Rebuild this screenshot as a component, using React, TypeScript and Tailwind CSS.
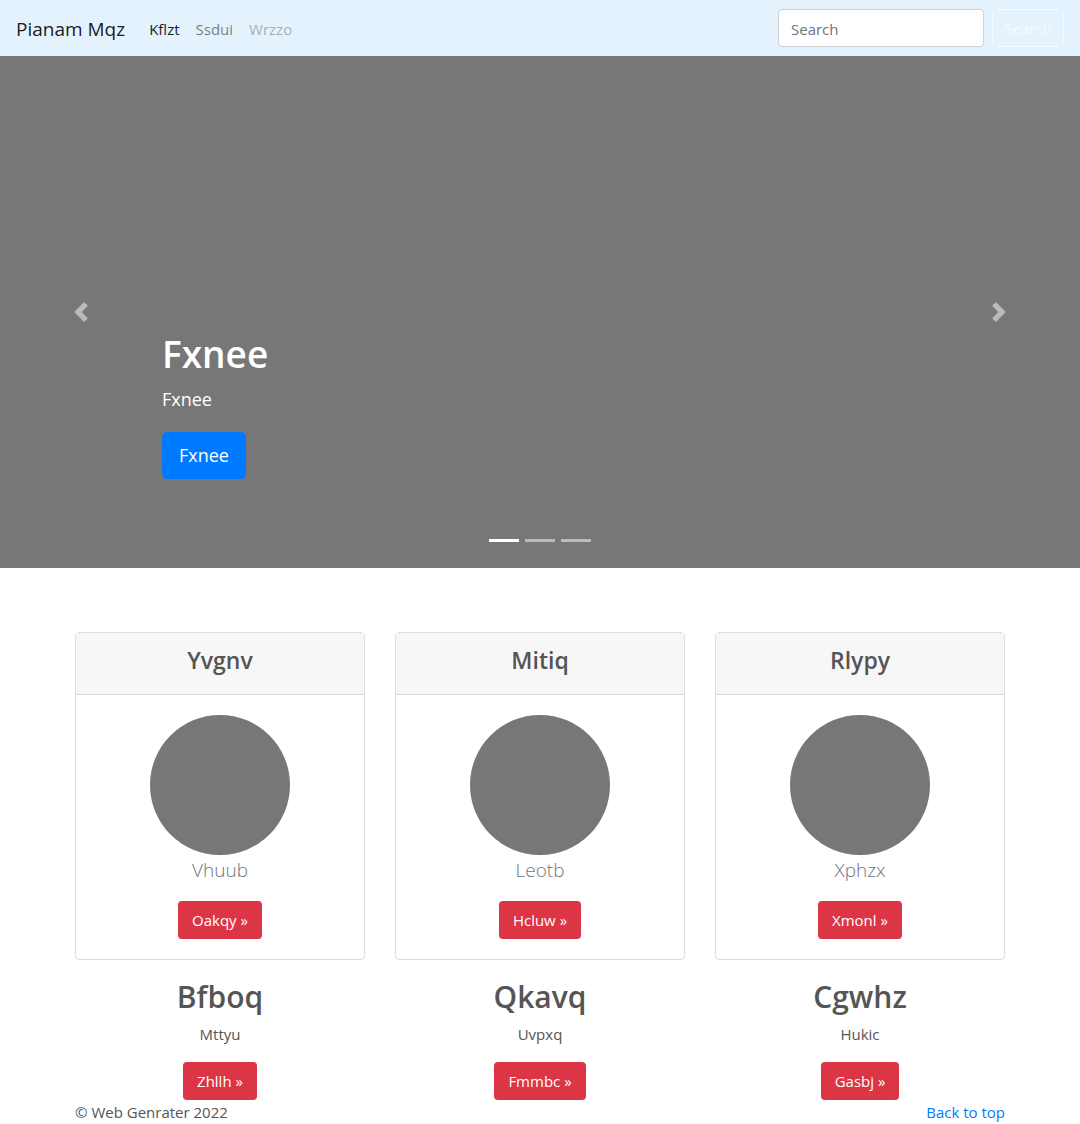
const font = { fontFamily: '"Open Sans", "Liberation Sans", Arial, sans-serif' }

const cards = [
  { title: 'Yvgnv', name: 'Vhuub', cta: 'Oakqy' },
  { title: 'Mitiq', name: 'Leotb', cta: 'Hcluw' },
  { title: 'Rlypy', name: 'Xphzx', cta: 'Xmonl' },
]

const features = [
  { title: 'Bfboq', text: 'Mttyu', cta: 'Zhllh' },
  { title: 'Qkavq', text: 'Uvpxq', cta: 'Fmmbc' },
  { title: 'Cgwhz', text: 'Hukic', cta: 'Gasbj' },
]

function Chevron({ flip }: { flip?: boolean }) {
  return (
    <svg
      viewBox="0 0 8 8"
      className={`h-5 w-5 fill-white/50 ${flip ? 'rotate-180' : ''}`}
    >
      <path d="M5.25 0l-4 4 4 4 1.5-1.5-2.5-2.5 2.5-2.5-1.5-1.5z" />
    </svg>
  )
}

function Navbar() {
  return (
    <nav className="flex h-14 items-center justify-between bg-[#e3f2fd] px-4">
      <div className="flex items-center pt-[2px]">
        <a className="mr-4 text-[19px] leading-[30px] text-black/90">Pianam Mqz</a>
        <div className="flex text-[15px]">
          <a className="px-2 text-black/90">Kflzt</a>
          <a className="px-2 text-black/50">Ssdui</a>
          <a className="px-2 text-black/30">Wrzzo</a>
        </div>
      </div>
      <div className="flex items-center">
        <input
          placeholder="Search"
          className="mr-2 h-[38px] w-[206px] rounded border border-[#ced4da] bg-white px-3 pt-[2px] text-[15px] text-[#495057] placeholder:text-[#6c757d]"
          style={font}
        />
        <button className="h-[38px] w-[72px] rounded border border-[#f8f9fa] text-[15px] text-[#f8f9fa]">
          Search
        </button>
      </div>
    </nav>
  )
}

function Carousel() {
  return (
    <div className="relative h-[512px] bg-[#777]">
      <div className="absolute inset-y-0 left-0 flex w-[15%] items-center justify-center">
        <Chevron />
      </div>
      <div className="absolute inset-y-0 right-0 flex w-[15%] items-center justify-center">
        <Chevron flip />
      </div>
      <div className="absolute left-[162px] top-[274px] flex flex-col items-start text-white">
        <h1 className="mb-[6px] text-[37px] font-semibold leading-[48px]">Fxnee</h1>
        <p className="mb-[18px] text-[18px] leading-[30px]">Fxnee</p>
        <a className="flex h-[47px] items-center rounded-[5px] bg-[#007bff] px-[17px] text-[18px] text-white">
          Fxnee
        </a>
      </div>
      <div className="absolute bottom-[26px] left-0 right-0 flex justify-center gap-[6px]">
        <span className="h-[3px] w-[30px] bg-white" />
        <span className="h-[3px] w-[30px] bg-white/50" />
        <span className="h-[3px] w-[30px] bg-white/50" />
      </div>
    </div>
  )
}

export default function App() {
  return (
    <div className="bg-white text-[#555]" style={font}>
      <Navbar />
      <Carousel />
      <div className="mx-auto w-[930px] pt-16">
        <div className="grid grid-cols-3 gap-[30px]">
          {cards.map((c) => (
            <div key={c.title} className="flex flex-col rounded border border-black/[0.13]">
              <div className="flex h-[62px] items-center justify-center border-b border-black/[0.13] bg-[#f7f7f7] pb-[6px] text-[23px] font-semibold">
                {c.title}
              </div>
              <div className="flex flex-col items-center px-5 pt-5 pb-5">
                <div className="h-[140px] w-[140px] rounded-full bg-[#777]" />
                <p className="mb-[16px] text-[19px] font-light leading-[30px] text-[#6c757d]">{c.name}</p>
                <a className="rounded bg-[#dc3545] px-[14px] text-[15px] leading-[38px] text-white">
                  {c.cta} »
                </a>
              </div>
            </div>
          ))}
        </div>
        <div className="mt-[18px] grid grid-cols-3 gap-[30px]">
          {features.map((f) => (
            <div key={f.title} className="flex flex-col items-center">
              <h2 className="mb-[6px] text-[30px] font-semibold leading-[38px]">{f.title}</h2>
              <p className="mb-4 text-[15px] leading-6">{f.text}</p>
              <a className="rounded bg-[#dc3545] px-[14px] text-[15px] leading-[38px] text-white">
                {f.cta} »
              </a>
            </div>
          ))}
        </div>
        <footer className="flex justify-between text-[15px] leading-6">
          <p>© Web Genrater 2022</p>
          <a className="text-[#007bff]">Back to top</a>
        </footer>
      </div>
    </div>
  )
}
